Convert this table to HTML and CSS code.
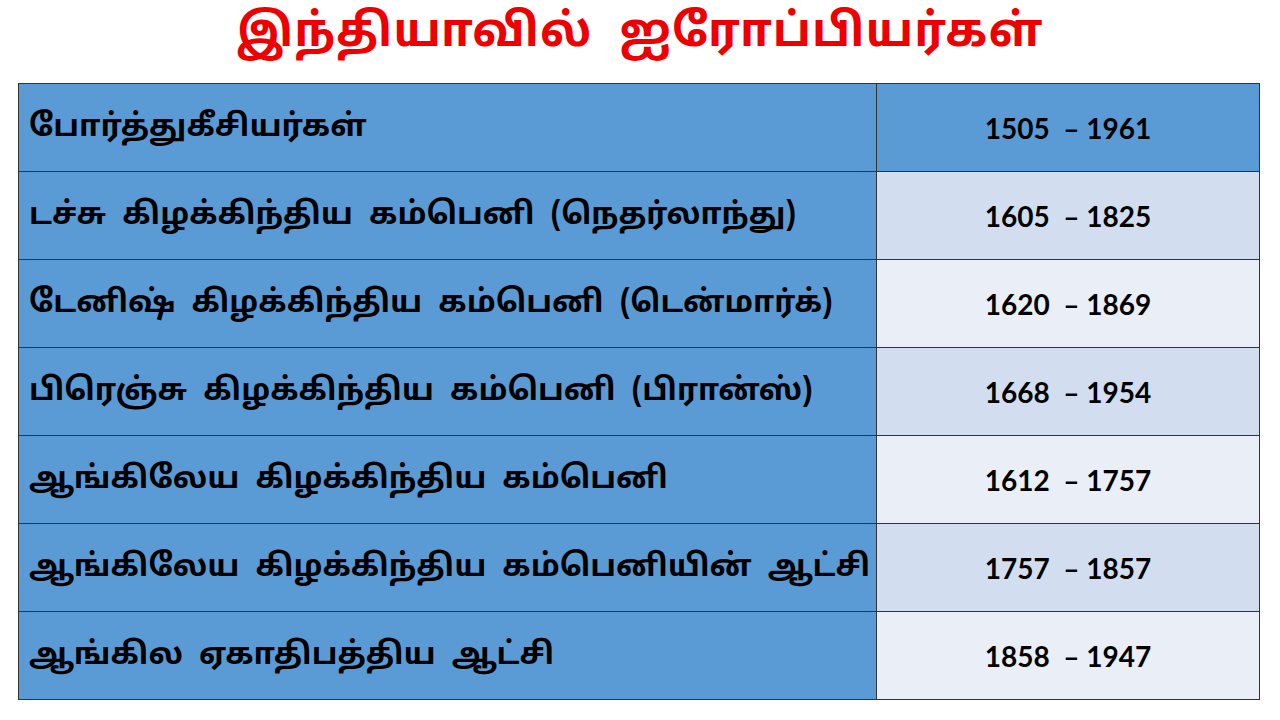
FILE: index.html
```html
<!DOCTYPE html>
<html lang="ta">
<head>
<meta charset="utf-8">
<link rel="stylesheet" href="styles.css">
</head>
<body>
<h1 class="title">இந்தியாவில் ஐரோப்பியர்கள்</h1>
<table class="grid">
<tr class="r1"><td class="name">போர்த்துகீசியர்கள்</td><td class="years">1505&nbsp; – 1961</td></tr>
<tr class="r2"><td class="name">டச்சு கிழக்கிந்திய கம்பெனி <span class="paren">(நெதர்லாந்து)</span></td><td class="years">1605&nbsp; – 1825</td></tr>
<tr class="r3"><td class="name">டேனிஷ் கிழக்கிந்திய கம்பெனி <span class="paren">(டென்மார்க்)</span></td><td class="years">1620&nbsp; – 1869</td></tr>
<tr class="r2"><td class="name">பிரெஞ்சு கிழக்கிந்திய கம்பெனி <span class="paren">(பிரான்ஸ்)</span></td><td class="years">1668&nbsp; – 1954</td></tr>
<tr class="r3"><td class="name">ஆங்கிலேய கிழக்கிந்திய கம்பெனி</td><td class="years">1612&nbsp; – 1757</td></tr>
<tr class="r2"><td class="name">ஆங்கிலேய கிழக்கிந்திய கம்பெனியின் ஆட்சி</td><td class="years">1757&nbsp; – 1857</td></tr>
<tr class="r3"><td class="name">ஆங்கில ஏகாதிபத்திய ஆட்சி</td><td class="years">1858&nbsp; – 1947</td></tr>
</table>
</body>
</html>
```
FILE: styles.css
```css
html, body {
  margin: 0;
  padding: 0;
  background: #ffffff;
  width: 1280px;
  height: 720px;
  overflow: hidden;
  font-family: "Noto Sans Tamil", "Lohit Tamil", "Noto Sans", sans-serif;
}
.title {
  margin: 0;
  height: 83px;
  line-height: 70px;
  text-align: center;
  color: #ee0000;
  font-size: 46px;
  font-weight: bold;
  letter-spacing: 1px;
  word-spacing: 14px;
}
.grid {
  margin-left: 18px;
  width: 1242px;
  border-collapse: collapse;
  table-layout: fixed;
}
.grid td {
  border: 1px solid #333333;
  height: 87px;
  padding: 0;
  color: #000;
}
.name {
  width: 847px;
  background: #5b9bd5;
  padding-left: 10px !important;
  font-size: 31px;
  font-weight: bold;
  word-spacing: 8px;
  white-space: nowrap;
}
.paren {
  font-size: 30.5px;
  word-spacing: 0;
}
.years {
  text-align: center;
  font-family: Lato, "Open Sans", sans-serif;
  font-size: 28px;
  font-weight: bold;
  white-space: pre;
}
.r1 .years { background: #5b9bd5; }
.r2 .years { background: #d2deef; }
.r3 .years { background: #eaeff7; }
```
